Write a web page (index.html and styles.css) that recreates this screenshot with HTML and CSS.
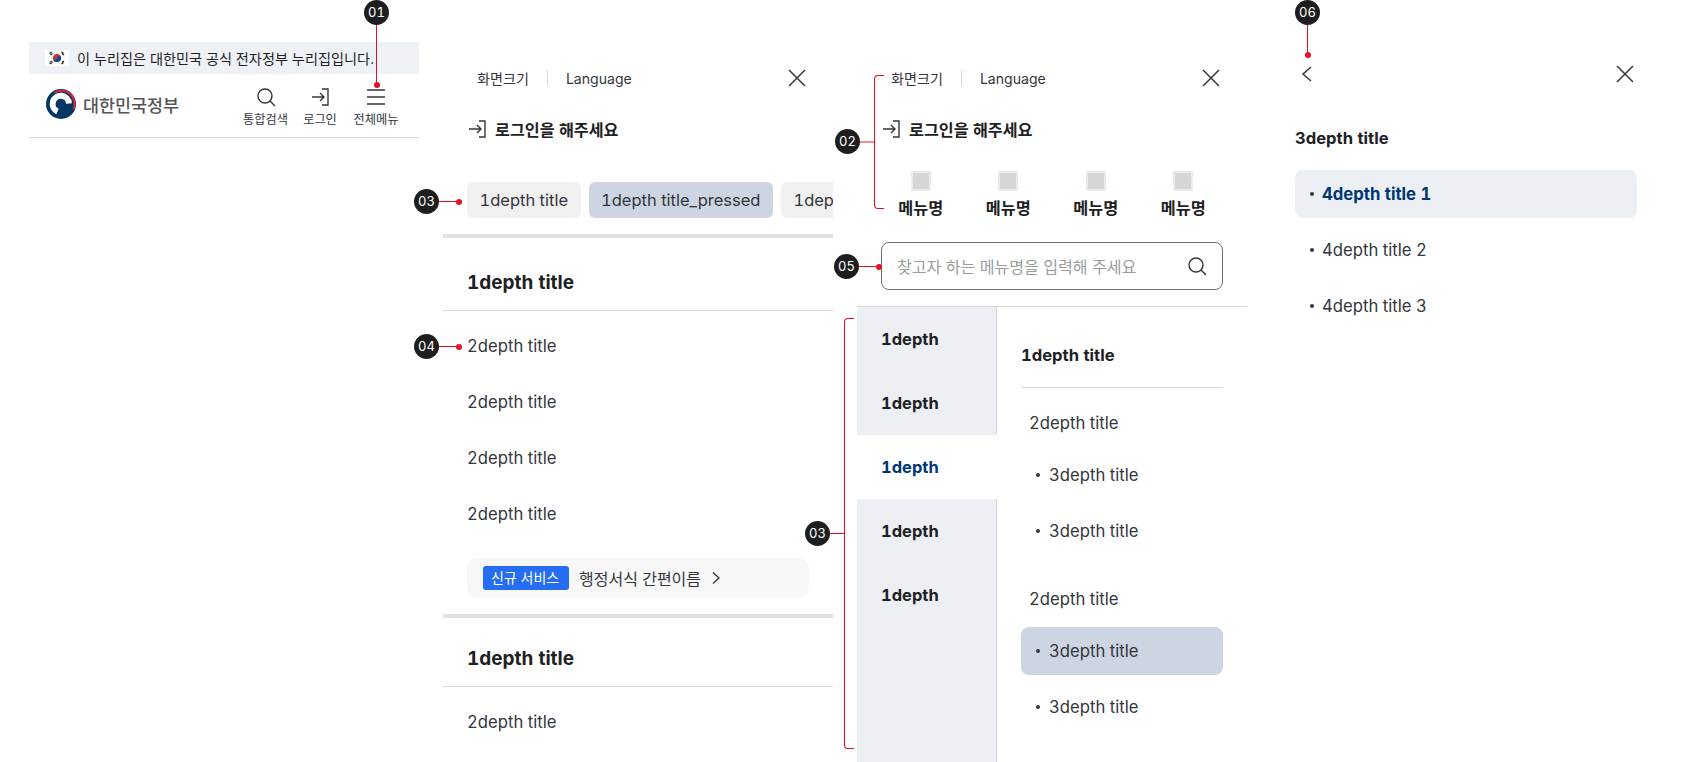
FILE: index.html
```html
<!DOCTYPE html>
<html lang="ko">
<head>
<meta charset="utf-8">
<title>전체메뉴</title>
<link rel="stylesheet" href="styles.css">
</head>
<body>
<svg class="sprites" width="0" height="0" aria-hidden="true">
  <symbol id="i-close" viewBox="0 0 24 24"><path d="M4 4l16 16M20 4L4 20" fill="none" stroke="currentColor" stroke-width="1.5"/></symbol>
  <symbol id="i-search" viewBox="0 0 24 24"><circle cx="11" cy="11" r="7" fill="none" stroke="currentColor" stroke-width="1.4"/><path d="M16 16l5 5" fill="none" stroke="currentColor" stroke-width="1.4"/></symbol>
  <symbol id="i-login" viewBox="0 0 24 24"><path d="M14 4h6v16h-6M4 12h12M12 8l4 4-4 4" fill="none" stroke="currentColor" stroke-width="1.4"/></symbol>
  <symbol id="i-menu" viewBox="0 0 24 24"><path d="M3 5h18M3 12h18M3 19h18" fill="none" stroke="currentColor" stroke-width="1.4"/></symbol>
</svg>
<div class="canvas">

  <section class="panel panel-header">
    <div class="gov-banner">
      <svg class="flag" viewBox="0 0 24 16" aria-hidden="true">
        <rect width="24" height="16" fill="#fff"/>
        <circle cx="12" cy="8" r="4" fill="#cd2e3a"/>
        <path d="M8 8a4 4 0 0 0 8 0a2 2 0 0 0-4 0a2 2 0 0 1-4 0z" fill="#0f4a9c"/>
        <path d="M4.500 3.500l2-1.500M5.500 5l2-1.500M16.500 2l2 1.500M17 3.500l2 1.500M4.500 12.500l2 1.500M5.500 11l2 1.500M16.500 14l2-1.500M17 12.500l2-1.500" stroke="#222" stroke-width="1.300"/>
      </svg>
      <span>이 누리집은 대한민국 공식 전자정부 누리집입니다.</span>
    </div>
    <header class="masthead">
      <div class="brand">
        <svg class="emblem" viewBox="0 0 30 30" aria-hidden="true">
          <circle cx="15" cy="15" r="15" fill="#003764"/>
          <path d="M8.500 3.800A13 13 0 0 1 27.500 20" fill="none" stroke="#e0233d" stroke-width="2"/>
          <path d="M23 14.500A8.200 8.200 0 1 0 11.500 22.500" fill="none" stroke="#fff" stroke-width="6"/>
        </svg>
        <span class="brand-name">대한민국정부</span>
      </div>
      <nav class="util-nav">
        <a class="util-item util-search"><svg class="icon-24"><use href="#i-search"/></svg><span>통합검색</span></a>
        <a class="util-item util-login"><svg class="icon-24"><use href="#i-login"/></svg><span>로그인</span></a>
        <a class="util-item util-menu"><svg class="icon-24"><use href="#i-menu"/></svg><span>전체메뉴</span></a>
      </nav>
    </header>
  </section>

  <section class="panel panel-main">
    <div class="topbar">
      <a class="top-link">화면크기</a><i class="top-sep"></i><a class="top-link">Language</a>
      <svg class="icon-24 top-close"><use href="#i-close"/></svg>
    </div>
    <a class="login-row"><svg class="icon-24"><use href="#i-login"/></svg><span>로그인을 해주세요</span></a>
    <div class="chips">
      <span class="chip">1depth title</span>
      <span class="chip chip-on">1depth title_pressed</span>
      <span class="chip">1depth title</span>
    </div>
    <div class="group">
      <h2 class="group-title">1depth title</h2>
      <ul class="link-list">
        <li>2depth title</li>
        <li>2depth title</li>
        <li>2depth title</li>
        <li>2depth title</li>
      </ul>
      <a class="promo"><span class="promo-tag">신규 서비스</span><span>행정서식 간편이름</span><svg class="promo-arrow" viewBox="0 0 10 14"><path d="M2 1.500L8 7l-6 5.500" fill="none" stroke="currentColor" stroke-width="1.400"/></svg></a>
    </div>
    <div class="group">
      <h2 class="group-title">1depth title</h2>
      <ul class="link-list">
        <li>2depth title</li>
      </ul>
    </div>
  </section>

  <section class="panel panel-tree">
    <div class="topbar">
      <a class="top-link">화면크기</a><i class="top-sep"></i><a class="top-link">Language</a>
      <svg class="icon-24 top-close"><use href="#i-close"/></svg>
    </div>
    <a class="login-row"><svg class="icon-24"><use href="#i-login"/></svg><span>로그인을 해주세요</span></a>
    <div class="quick">
      <div class="quick-item"><i class="quick-icon"></i><span>메뉴명</span></div>
      <div class="quick-item"><i class="quick-icon"></i><span>메뉴명</span></div>
      <div class="quick-item"><i class="quick-icon"></i><span>메뉴명</span></div>
      <div class="quick-item"><i class="quick-icon"></i><span>메뉴명</span></div>
    </div>
    <div class="search-box">
      <span class="search-hint">찾고자 하는 메뉴명을 입력해 주세요</span>
      <svg class="icon-24 search-icon"><use href="#i-search"/></svg>
    </div>
    <div class="tree">
      <ul class="tree-side">
        <li>1depth</li>
        <li>1depth</li>
        <li class="on">1depth</li>
        <li>1depth</li>
        <li>1depth</li>
      </ul>
      <div class="tree-body">
        <h3 class="tree-title">1depth title</h3>
        <div class="tree-sub">2depth title</div>
        <ul class="dot-list">
          <li>3depth title</li>
          <li>3depth title</li>
        </ul>
        <div class="tree-sub tree-sub-next">2depth title</div>
        <ul class="dot-list">
          <li class="on">3depth title</li>
          <li>3depth title</li>
        </ul>
      </div>
    </div>
  </section>

  <section class="panel panel-detail">
    <div class="detail-top">
      <svg class="back" viewBox="0 0 24 24"><path d="M16 5l-8 7 8 7" fill="none" stroke="currentColor" stroke-width="1.500"/></svg>
      <svg class="icon-24"><use href="#i-close"/></svg>
    </div>
    <h3 class="detail-title">3depth title</h3>
    <ul class="detail-list">
      <li class="on">4depth title 1</li>
      <li>4depth title 2</li>
      <li>4depth title 3</li>
    </ul>
  </section>

  <div class="mark mark-01 mark-down"><b>01</b></div>
  <div class="mark mark-06 mark-down"><b>06</b></div>
  <div class="mark mark-03a mark-right"><b>03</b></div>
  <div class="mark mark-04 mark-right"><b>04</b></div>
  <div class="mark mark-05 mark-right"><b>05</b></div>
  <div class="mark mark-02 mark-brace"><b>02</b></div>
  <div class="mark mark-03b mark-brace"><b>03</b></div>
  <i class="brace brace-02"></i>
  <i class="brace brace-03"></i>
</div>
</body>
</html>
```

FILE: styles.css
```css
* { box-sizing: border-box; }
html, body { margin: 0; padding: 0; background: #fff; }
body {
  width: 1690px;
  height: 762px;
  overflow: hidden;
  color: #1e2124;
  font-family: Inter, "Noto Sans CJK KR", "Noto Sans", sans-serif;
  font-feature-settings: "tnum";
}
ul { list-style: none; margin: 0; padding: 0; }
h2, h3 { margin: 0; }
.sprites { position: absolute; }
.canvas {
  position: relative;
  display: flex;
  align-items: flex-start;
  height: 762px;
  padding-left: 29px;
  overflow: hidden;
}
.panel { width: 390px; flex: none; margin-right: 24px; }
.icon-24 { width: 24px; height: 24px; display: block; color: #33363d; flex: none; }

/* panel 1 */
.panel-header { margin-top: 42px; }
.gov-banner {
  height: 32px;
  background: #eef2f7;
  display: flex;
  align-items: center;
  padding-left: 16px;
  gap: 8px;
  font-size: 14.200px;
  color: #1e2124;
  white-space: nowrap;
}
.flag { width: 24px; height: 16px; flex: none; }
.masthead {
  height: 64px;
  display: flex;
  justify-content: space-between;
  align-items: flex-start;
  border-bottom: 1px solid #d6d6d6;
  padding: 0 20px 0 17px;
}
.brand { display: flex; align-items: center; gap: 7px; margin-top: 15px; }
.emblem { width: 30px; height: 30px; display: block; }
.brand-name { font-size: 17.400px; font-weight: 500; color: #555; }
.util-nav { display: flex; }
.util-item {
  display: flex;
  flex-direction: column;
  align-items: center;
  font-size: 12.200px;
  line-height: 18px;
  color: #33363d;
  padding-top: 11px;
  white-space: nowrap;
}
.util-item span { margin-top: 2px; }
.util-search { width: 46px; margin-right: 13.500px; }
.util-login { width: 36px; margin-right: 15px; }
.util-menu { width: 46px; }

/* shared top of panels */
.panel-main { margin-top: 66px; overflow: hidden; height: 696px; }
.panel-tree { margin-top: 66px; height: 696px; margin-right: 48px; overflow: hidden; }
.topbar {
  height: 24px;
  display: flex;
  align-items: center;
  padding-left: 34px;
  padding-right: 24px;
  font-size: 14.100px;
  color: #33363d;
}
.top-link { white-space: nowrap; }
.top-sep { width: 1px; height: 16px; background: #d6d6d6; margin: 0 18px; }
.top-close { margin-left: auto; }
.login-row {
  display: flex;
  align-items: center;
  gap: 6px;
  margin-top: 27px;
  margin-left: 22px;
  height: 24px;
  font-size: 16.200px;
  font-weight: 700;
}

/* panel 2 */
.chips { display: flex; gap: 8px; margin: 41px 0 0 24px; white-space: nowrap; }
.chip {
  height: 36px;
  padding: 0 12.500px;
  line-height: 36px;
  font-size: 16.500px;
  background: #f0f0f0;
  border-radius: 6px;
  color: #33363d;
  flex: none;
}
.chip-on { background: #cdd5e2; }
.group { border-top: 4px solid #e2e2e2; margin-top: 16px; }
.group-title {
  height: 73px;
  line-height: 89px;
  padding-left: 24px;
  font-size: 19px;
  font-weight: 700;
  border-bottom: 1px solid #d6d6d6;
}
.group + .group .group-title { height: 69px; line-height: 81px; }
.link-list li {
  height: 56px;
  line-height: 71px;
  padding-left: 24px;
  font-size: 16.700px;
  color: #33363d;
}
.link-list { margin-bottom: 23px; }
.promo {
  display: flex;
  align-items: center;
  height: 40px;
  margin: 0 24px;
  padding-left: 16px;
  gap: 10px;
  border-radius: 10px;
  background: #f7f7f7;
  font-size: 16px;
  color: #33363d;
}
.promo-tag {
  height: 24px;
  line-height: 23px;
  padding: 0 8px;
  border-radius: 3px;
  background: #256ef4;
  color: #fff;
  font-size: 14px;
  width: 86px;
  white-space: nowrap;
}
.promo-arrow { width: 10px; height: 14px; color: #33363d; }

/* panel 3 */
.quick {
  display: grid;
  grid-template-columns: repeat(4, 87.500px);
  margin: 30px 0 0 20px;
}
.quick-item {
  display: flex;
  flex-direction: column;
  align-items: center;
  gap: 5px;
  font-size: 16.300px;
  font-weight: 700;
  line-height: 24px;
}
.quick-icon {
  width: 20px;
  height: 20px;
  background: #d6d6d6;
  border: 2px solid #eaeaea;
  display: block;
}
.search-box {
  display: flex;
  align-items: center;
  justify-content: space-between;
  height: 48px;
  margin: 22px 24px 0;
  padding: 0 13px 0 15px;
  border: 1px solid #6d7075;
  border-radius: 8px;
}
.search-hint { font-size: 16.100px; color: #9a9ca0; white-space: nowrap; }
.tree {
  display: flex;
  margin-top: 16px;
  border-top: 1px solid #d6d6d6;
  height: 456px;
}
.tree-side {
  width: 140px;
  flex: none;
  background: #eceff4;
  border-right: 1px solid #d6d6d6;
  height: 100%;
}
.tree-side li {
  height: 64px;
  padding-left: 24px;
  line-height: 64px;
  font-size: 16.500px;
  font-weight: 700;
}
.tree-side li.on { background: #fff; color: #003675; margin-right: -1px; position: relative; }
.tree-body { width: 250px; padding: 0 24px; }
.tree-title {
  height: 81px;
  line-height: 96px;
  font-size: 16.600px;
  font-weight: 700;
  border-bottom: 1px solid #d6d6d6;
}
.tree-sub { height: 63px; line-height: 70px; padding-left: 8px; font-size: 16.700px; color: #33363d; }
.tree-sub-next { height: 72px; line-height: 88px; }
.dot-list li, .detail-list li {
  position: relative;
  height: 48px;
  line-height: 48px;
  padding-left: 28px;
  font-size: 16.700px;
  color: #33363d;
  border-radius: 8px;
}
.dot-list li + li { margin-top: 8px; }
.dot-list li::before, .detail-list li::before {
  content: "";
  position: absolute;
  left: 15px;
  top: 22px;
  width: 4px;
  height: 4px;
  border-radius: 50%;
  background: #33363d;
}
.dot-list li.on { background: #cdd5e2; }

/* panel 4 */
.panel-detail { width: 342px; margin: 62px 0 0; }
.detail-top { display: flex; justify-content: space-between; height: 24px; }
.back { width: 24px; height: 24px; color: #33363d; display: block; }
.detail-title { margin-top: 40px; height: 24px; line-height: 24px; font-size: 16.600px; font-weight: 700; }
.detail-list { margin-top: 20px; }
.detail-list li { padding-left: 27px; }
.detail-list li + li { margin-top: 8px; }
.detail-list li.on { background: #eceff4; color: #003675; font-weight: 700; }

/* annotations */
.mark { position: absolute; width: 25px; height: 25px; }
.mark b {
  display: block;
  position: relative;
  width: 25px;
  height: 25px;
  border-radius: 50%;
  background: #1e1e1e;
  color: #fff;
  font-size: 13px;
  font-weight: 400;
  line-height: 25px;
  text-align: center;
  z-index: 1;
}
.mark::before { content: ""; position: absolute; background: #e60f23; }
.mark::after {
  content: "";
  position: absolute;
  width: 6px;
  height: 6px;
  border-radius: 50%;
  background: #e60f23;
}
.mark-down::before { left: 12px; top: 24px; width: 1px; }
.mark-down::after { left: 9.500px; }
.mark-right::before { top: 12px; left: 24px; height: 1px; width: 20px; }
.mark-right::after { top: 9.500px; left: 42px; }
.mark-brace::after { display: none; }
.mark-brace::before { top: 12px; left: 24px; height: 1px; width: 15px; }
.mark-01 { left: 364px; top: 0; }
.mark-01::before { height: 60px; }
.mark-01::after { top: 82px; }
.mark-06 { left: 1295px; top: 0; }
.mark-06::before { height: 30px; }
.mark-06::after { top: 52px; }
.mark-03a { left: 414px; top: 189px; }
.mark-04 { left: 414px; top: 334px; }
.mark-05 { left: 834px; top: 254px; }
.mark-02 { left: 835px; top: 129px; }
.mark-02::before { height: 2px; background: #f08a94; top: 12px; width: 15px; }
.mark-03b { left: 805px; top: 521px; }
.brace {
  position: absolute;
  display: block;
  border: 1px solid #e60f23;
  border-right: 0;
  border-radius: 4px 0 0 4px;
  width: 10px;
}
.brace-02 { left: 874px; top: 75px; height: 134px; }
.brace-03 { left: 844px; top: 318px; height: 431px; }
```
